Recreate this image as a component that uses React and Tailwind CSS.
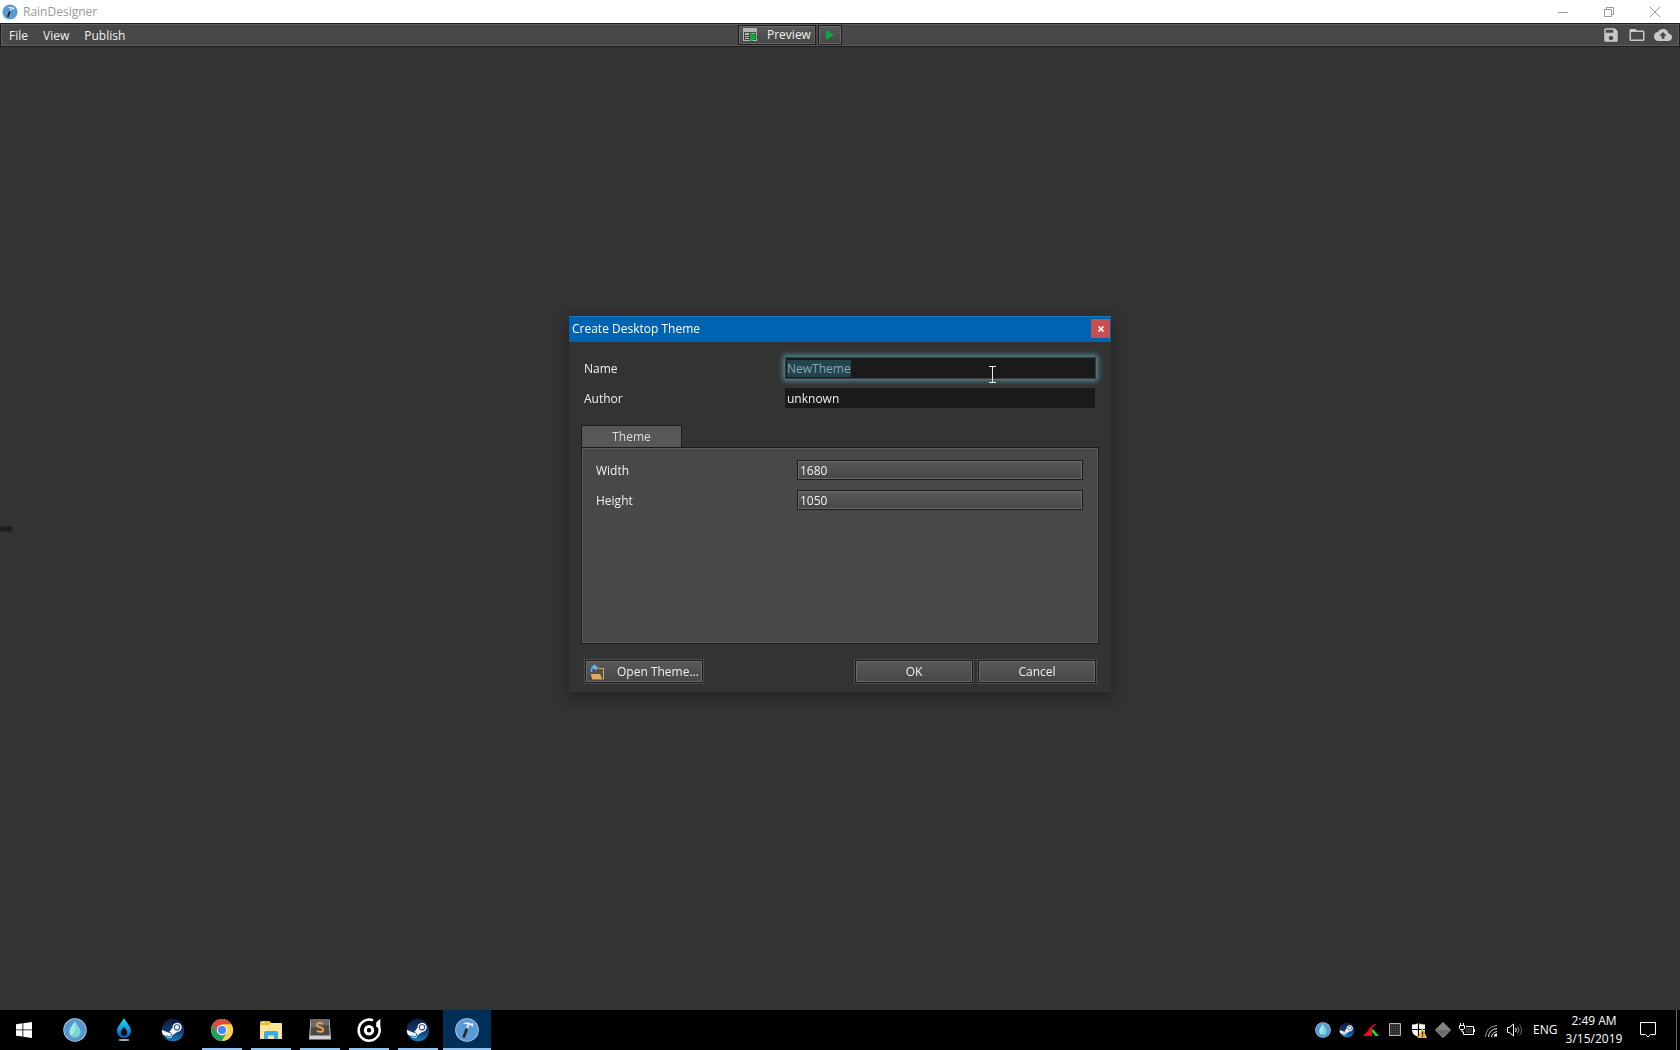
import { useEffect, useRef } from "react";
import { MdCloudUpload, MdFolderOpen, MdSave } from "react-icons/md";

const bevel = "border border-[#1c1c1c] inset-ring inset-ring-[#696969] bg-linear-to-b from-[#595959] to-[#474747]";

function HammerIcon({ className = "" }) {
  return (
    <svg viewBox="0 0 24 24" className={className} aria-hidden="true">
      <circle cx="12" cy="12" r="11.8" fill="#b9d5ee" />
      <circle cx="12" cy="12" r="11" fill="#5a9bd5" />
      <path d="M13.200 7l-1.700 5.500" stroke="#e8eef3" strokeWidth="1.800" />
      <path d="M11.600 11.500L9 18.500" stroke="#2b2b2b" strokeWidth="2.800" strokeLinecap="round" />
      <path d="M7.800 5.800c2-1.500 4-1.600 6-1l3.200 1 .5-.5 1 .4-.8 3-1-.3-.2-.8-4-1.200c-1.500-.5-3-.6-4.700-.6z" fill="#f6f8fa" />
    </svg>
  );
}

function DropIcon({ className = "" }) {
  return (
    <svg viewBox="0 0 24 24" className={className} aria-hidden="true">
      <circle cx="12" cy="12" r="11.700" fill="#c3d9ec" />
      <circle cx="12" cy="12" r="10.900" fill="#5598d3" />
      <path d="M12 3.500c3 4.500 5.500 7 5.500 10.500a5.500 5.500 0 0 1-11 0c0-3.500 2.500-6 5.500-10.500z" fill="#7fd6d0" />
      <path d="M12 3.500c-3 4.500-5.500 7-5.500 10.500 0 1.500.6 2.900 1.600 3.900 4-3 5-8 3.900-14.400z" fill="#a3e8e0" />
    </svg>
  );
}

function FlameIcon({ className = "" }) {
  return (
    <svg viewBox="0 0 24 24" className={className} aria-hidden="true">
      <defs>
        <linearGradient id="flame" x1="0" y1="0" x2="0" y2="1">
          <stop offset="0" stopColor="#1fe0f0" />
          <stop offset="0.5" stopColor="#0aa6e6" />
          <stop offset="1" stopColor="#0a56b4" />
        </linearGradient>
      </defs>
      <path d="M12 0c3 5.500 7 8.500 7 13a7 7 0 0 1-14 0c0-4.500 4-7.500 7-13z" fill="url(#flame)" />
      <path d="M12 8.500c1.600 2.400 3.200 4 3.200 6a3.200 3.200 0 0 1-6.400 0c0-2 1.600-3.600 3.200-6z" fill="#020b14" />
      <ellipse cx="12" cy="22" rx="5.500" ry="0.900" fill="#a9bcc8" />
    </svg>
  );
}

function SteamIcon({ className = "" }) {
  return (
    <svg viewBox="0 0 24 24" className={className} aria-hidden="true">
      <defs>
        <linearGradient id="steam" x1="0" y1="0" x2="0" y2="1">
          <stop offset="0" stopColor="#101a3c" />
          <stop offset="0.500" stopColor="#12356c" />
          <stop offset="1" stopColor="#1482bd" />
        </linearGradient>
        <clipPath id="steamClip">
          <circle cx="12" cy="12" r="11.200" />
        </clipPath>
      </defs>
      <circle cx="12" cy="12" r="11.200" fill="url(#steam)" />
      <g clipPath="url(#steamClip)">
        <path d="M0 11.500l6.500 2.800 1.800-.3 3.200-4.600a4.600 4.600 0 1 1 4.700 4.500l-4.700 3.300a3.300 3.300 0 0 1-6.300.9L0 16z" fill="#f4f6f8" />
        <circle cx="16" cy="9.300" r="3.100" fill="#14346a" />
        <circle cx="16" cy="9.300" r="2.200" fill="#f4f6f8" />
        <path d="M6 17.200a2.300 2.300 0 1 0 1.200-2.700" fill="none" stroke="#14508a" strokeWidth="0.900" />
      </g>
    </svg>
  );
}

function ChromeIcon({ className = "" }) {
  return (
    <svg viewBox="0 0 24 24" className={className} aria-hidden="true">
      <circle cx="12" cy="12" r="11" fill="#fbd04b" />
      <path d="M12 1a11 11 0 0 1 9.500 5.500H12L7.200 14.700 2.500 6.500A11 11 0 0 1 12 1z" fill="#de4c3f" />
      <path d="M2.500 6.500l4.700 8.300 9.600 0-4.800 8.200A11 11 0 0 1 2.500 6.500z" fill="#1ba160" />
      <path d="M21.500 6.500H12l4.800 8.300-4.800 8.200A11 11 0 0 0 21.500 6.500z" fill="#fbd04b" />
      <circle cx="12" cy="12" r="5.200" fill="#f4f6f8" />
      <circle cx="12" cy="12" r="4.100" fill="#4287f3" />
    </svg>
  );
}

function ExplorerIcon({ className = "" }) {
  return (
    <svg viewBox="0 0 24 24" className={className} aria-hidden="true">
      <path d="M1 4.500q0-1.500 1.500-1.500h8L12 5h9.500q1 0 1 1v15H1z" fill="#f0b92e" />
      <path d="M1 7h9l1.500-2H22q1 0 1 1v15H1z" fill="#fde69a" />
      <path d="M3 4.500h2" stroke="#fff4c4" />
      <path d="M5 21v-6q0-2 2-2h10q2 0 2 2v6h-4v-3.500H9V21z" fill="#37aee4" />
    </svg>
  );
}

function SublimeIcon({ className = "" }) {
  return (
    <svg viewBox="0 0 24 24" className={className} aria-hidden="true">
      <path d="M2.500 1h19L23 21.500H1z" fill="#d2d2d2" />
      <path d="M3.200 1h17.600l1 16.500H2.200z" fill="#4a4a4a" />
      <path d="M3.200 1h17.600l.4 6Q12 7 2.800 10z" fill="#6b6b6b" />
      <path d="M15 5.500q-6-1.600-6 1.500 0 1.800 3 2.200 3.200.500 3.200 2.500 0 3.200-6.400 1.400" fill="none" stroke="#f59a3c" strokeWidth="2" />
    </svg>
  );
}

function GrooveIcon({ className = "" }) {
  return (
    <svg viewBox="0 0 24 24" className={className} aria-hidden="true">
      <path d="M16 2.400A10.500 10.500 0 1 0 22 8.500" fill="none" stroke="#fff" strokeWidth="2.500" />
      <path d="M19.200 4.500L23.300.8V9.500q-2.500 1-4.100-1z" fill="#fff" />
      <circle cx="12" cy="12.200" r="3.700" fill="none" stroke="#fff" strokeWidth="3" />
    </svg>
  );
}

function WindowsIcon() {
  return (
    <svg viewBox="0 0 16 16" className="size-4" fill="#fff" aria-hidden="true">
      <path d="M0 2.200l6.500-.9v6.200H0zM7.300 1.200L16 0v7.500H7.300zM0 8.300h6.500v6.300L0 13.700zM7.300 8.300H16V16l-8.700-1.200z" />
    </svg>
  );
}

function PreviewIcon() {
  return (
    <svg viewBox="0 0 15 14" className="h-3.5 w-[15px]" aria-hidden="true">
      <path d="M0 0h14v13H0z" fill="#b4b4b4" />
      <path d="M1 4h12v8H1z" fill="#484848" />
      <path d="M2 5h4v2H2zM2 8h4v1H2zM2 10h4v1H2zM8 5h4v1H8z" fill="#b4b4b4" />
      <path d="M7 4l8 5-8 5z" fill="#0caa3c" />
    </svg>
  );
}

function OpenThemeIcon() {
  return (
    <svg viewBox="0 0 15 16" className="h-4 w-[15px]" aria-hidden="true">
      <path d="M8 4.500h5.500v11" fill="none" stroke="#d9a862" />
      <path d="M.5 10h9.500l2.500 5.500H2.500z" fill="#dcaa64" />
      <path d="M1.500 8V5.300q0-2 2-2H5" fill="none" stroke="#58a8ea" strokeWidth="1.800" />
      <path d="M2.500 1.800L4.500.8 8 3.500 5 7.200V4.800H3z" fill="#6bb8f4" />
    </svg>
  );
}

function TrayTriangles() {
  return (
    <svg viewBox="0 0 16 16" className="size-4" aria-hidden="true">
      <path d="M0 14L9 4.500V14z" fill="#f00d12" />
      <path d="M9 7.500h1.500L16 14h-3.500L9 10z" fill="#12e41c" />
      <path d="M6 7.500L12.500 2" stroke="#f00d12" strokeWidth="1.500" />
    </svg>
  );
}

function TrayGrid() {
  return (
    <svg viewBox="0 0 16 16" className="size-4" aria-hidden="true">
      <defs>
        <pattern id="dots" width="2" height="2" patternUnits="userSpaceOnUse">
          <path d="M0 0h2v2H0z" fill="#2a2a2a" />
          <path d="M0 0h1v1H0z" fill="#4d4d4d" />
        </pattern>
      </defs>
      <path d="M2.500 1.500h11v12h-11z" fill="url(#dots)" stroke="#b4b4b4" />
    </svg>
  );
}

function TrayShield() {
  return (
    <svg viewBox="0 0 16 16" className="size-4" aria-hidden="true">
      <path d="M1 2.500Q5 2.500 7.500 1 10 2.500 14 2.500V8q0 5-6.500 7Q1 13 1 8z" fill="#fff" />
      <path d="M7.500 1v14M1 7.500h13" stroke="#000" strokeWidth="1.200" />
      <path d="M11.500 6L16 16H6.500z" fill="#f9b91e" />
      <path d="M11.500 9.500v3.200M11.500 13.500v1.300" stroke="#222" strokeWidth="1.300" />
    </svg>
  );
}

function TrayDiamond() {
  return (
    <svg viewBox="0 0 16 16" className="size-4" aria-hidden="true">
      <path d="M8 .5L15.500 8 8 15.500.5 8z" fill="#6a6a6a" stroke="#a5a5a5" />
      <path d="M8 1.500L14.500 8 1.500 8z" fill="#848484" />
    </svg>
  );
}

function TrayBattery() {
  return (
    <svg viewBox="0 0 16 16" className="size-4" fill="none" stroke="#fff" aria-hidden="true">
      <path d="M7 4.500h7.500v8h-10V10M15.500 7v3" />
      <path d="M6.500 6h6.500v5h-6.500z" fill="#333" stroke="none" />
      <path d="M1.500 1v2.500M4.500 1v2.500M.5 3.500h5v3l-1 1h-3l-1-1zM3 7.500V10h2" />
    </svg>
  );
}

function TrayWifi() {
  return (
    <svg viewBox="0 0 16 16" className="size-4" fill="none" stroke="#e8e8e8" aria-hidden="true">
      <path d="M2.500 15Q3 4.500 14 3.500" stroke="#999" />
      <path d="M5.500 15Q6 7.500 14 6.500M8.500 15Q9 10.500 14 9.500" />
      <path d="M11 14.500a3 3 0 0 1 3-3v3z" fill="#fff" stroke="none" />
    </svg>
  );
}

function TrayVolume() {
  return (
    <svg viewBox="0 0 16 16" className="size-4" fill="none" stroke="#fff" aria-hidden="true">
      <path d="M.5 5.500h2L6.500 2v12l-4-3.500h-2z" />
      <path d="M8.500 6q1.500 2 0 4" />
      <path d="M10.500 4.500q3 3.500 0 7" stroke="#999" />
      <path d="M12.500 2.500q4 5.500 0 11" stroke="#666" />
    </svg>
  );
}

const taskbarItems = [
  { name: "Rain", Icon: DropIcon },
  { name: "Rainmeter", Icon: FlameIcon },
  { name: "Steam", Icon: SteamIcon },
  { name: "Chrome", Icon: ChromeIcon, open: true },
  { name: "File Explorer", Icon: ExplorerIcon, open: true },
  { name: "Sublime Text", Icon: SublimeIcon, open: true },
  { name: "Groove Music", Icon: GrooveIcon, open: true },
  { name: "Steam window", Icon: SteamIcon, open: true },
  { name: "RainDesigner", Icon: HammerIcon, open: true, active: true },
];

const trayItems = [
  { name: "Rain", Icon: DropIcon },
  { name: "Steam", Icon: SteamIcon },
  { name: "Monitor", Icon: TrayTriangles },
  { name: "Grid", Icon: TrayGrid },
  { name: "Security", Icon: TrayShield },
  { name: "Diamond", Icon: TrayDiamond },
  { name: "Power", Icon: TrayBattery },
  { name: "Network", Icon: TrayWifi },
  { name: "Volume", Icon: TrayVolume },
];

function TitleBar() {
  return (
    <header className="flex h-[23px] items-center bg-white pr-0.5 text-[#999]">
      <HammerIcon className="ml-0.5 size-4" />
      <h1 className="ml-[5px] flex-1">RainDesigner</h1>
      <button aria-label="Minimize" className="flex h-full w-[46px] items-center justify-center">
        <svg viewBox="0 0 10 10" className="size-2.5" stroke="currentColor"><path d="M0 5.500h10" /></svg>
      </button>
      <button aria-label="Restore" className="flex h-full w-[46px] items-center justify-center">
        <svg viewBox="0 0 10 10" className="size-2.5" fill="none" stroke="currentColor"><path d="M.5 2.500h7v7h-7zM2.500 2V.5h7v7H8" /></svg>
      </button>
      <button aria-label="Close" className="flex h-full w-[46px] items-center justify-center">
        <svg viewBox="0 0 10 10" className="size-2.5" stroke="currentColor"><path d="M0 0l10 10M10 0L0 10" /></svg>
      </button>
    </header>
  );
}

function MenuBar() {
  return (
    <div className="grid h-6 grid-cols-[1fr_auto_1fr] items-center border border-[#1c1c1c] bg-[#484848] text-[#f0f0f0] inset-ring inset-ring-[#5c5c5c]">
      <nav className="flex gap-[15px] pt-0.5 pl-2">
        <button>File</button>
        <button>View</button>
        <button>Publish</button>
      </nav>
      <div className="flex gap-0.5 pr-[100px]">
        <button className={`flex h-5 w-[78px] items-center gap-[9px] pl-1 ${bevel}`}>
          <PreviewIcon />
          Preview
        </button>
        <button aria-label="Run" className={`flex h-5 w-6 items-center justify-center ${bevel}`}>
          <svg viewBox="0 0 8 10" className="h-2.5 w-2" fill="#0caa3c"><path d="M0 0l8 5-8 5z" /></svg>
        </button>
      </div>
      <div className="flex justify-end gap-2 pr-[7px] text-[#c8c8c8]">
        <button aria-label="Save"><MdSave size={18} /></button>
        <button aria-label="Open"><MdFolderOpen size={18} /></button>
        <button aria-label="Upload"><MdCloudUpload size={18} /></button>
      </div>
    </div>
  );
}

function Dialog() {
  const nameRef = useRef(null);

  useEffect(() => {
    nameRef.current.focus();
    nameRef.current.select();
  }, []);

  return (
    <section role="dialog" aria-labelledby="dialog-title" className="w-[542px] bg-[#333] text-[#f0f0f0] shadow-[0_4px_16px_rgba(0,0,0,0.4)]">
      <div className="flex h-[26px] items-center justify-between border-t border-[#1a78c2] bg-[#0063b1] pr-px pb-0.5 pl-[3px]">
        <h2 id="dialog-title" className="text-white">Create Desktop Theme</h2>
        <button aria-label="Close dialog" className="flex size-[19px] items-center justify-center bg-[#c75050]">
          <svg viewBox="0 0 6 6" className="size-1.5" stroke="#fff" strokeWidth="1.500"><path d="M.5.5l5 5M5.500.5l-5 5" /></svg>
        </button>
      </div>

      <form className="px-3 pt-[15px] pb-2" onSubmit={(e) => e.preventDefault()}>
        <div className="flex h-[22px] items-center px-[3px]">
          <label htmlFor="name" className="flex-1 pt-0.5">Name</label>
          <div className="relative w-[311px]">
            <input
              id="name"
              ref={nameRef}
              defaultValue="NewTheme"
              className="block h-[22px] w-full border border-[#3c3c3c] bg-[#1a1a1a] px-px shadow-[0_0_5px_2px_#4f8a99] outline-none selection:bg-[#23444f] selection:text-[#84a6ae]"
            />
            <svg viewBox="0 0 7 17" className="absolute top-[9px] left-[204px] h-[17px] w-[7px]" fill="none" stroke="#e8e8e8" aria-hidden="true">
              <path d="M0 .5h7M3.500 1v15M0 16.500h7" />
            </svg>
          </div>
        </div>
        <div className="mt-2 flex h-[22px] items-center pr-1 pl-[3px]">
          <label htmlFor="author" className="flex-1 pt-0.5">Author</label>
          <input id="author" defaultValue="unknown" className="h-5 w-[310px] bg-[#1a1a1a] px-0.5 outline-none" />
        </div>

        <div role="tablist" className="mt-4 flex">
          <button type="button" role="tab" aria-selected="true" className="h-[22px] w-[101px] border border-b-0 border-[#1c1c1c] bg-[#575757] text-[#dcdcdc]">
            Theme
          </button>
        </div>
        <div role="tabpanel" className="h-[197px] space-y-2.5 border border-[#1c1c1c] bg-[#484848] pt-3 pr-[15px] pl-3.5 inset-ring inset-ring-[#5c5c5c]">
          <div className="flex items-center">
            <label htmlFor="width" className="flex-1 pt-0.5">Width</label>
            <input id="width" defaultValue="1680" className={`h-5 w-[286px] px-0.5 outline-none ${bevel}`} />
          </div>
          <div className="flex items-center">
            <label htmlFor="height" className="flex-1 pt-0.5">Height</label>
            <input id="height" defaultValue="1050" className={`h-5 w-[286px] px-0.5 outline-none ${bevel}`} />
          </div>
        </div>

        <div className="mt-4 mb-px flex gap-[5px] pr-[3px] pl-1">
          <button type="button" className={`mr-auto flex h-[23px] w-[118px] items-center gap-3 pl-1 ring ring-[#4c4c4c] ${bevel}`}>
            <OpenThemeIcon />
            Open Theme...
          </button>
          <button className={`h-[23px] w-[118px] ring ring-[#4c4c4c] ${bevel}`}>OK</button>
          <button type="button" className={`h-[23px] w-[118px] ring ring-[#4c4c4c] ${bevel}`}>Cancel</button>
        </div>
      </form>
    </section>
  );
}

function Taskbar() {
  return (
    <footer className="flex h-10 items-stretch bg-black text-white">
      <button aria-label="Start" className="mr-[3px] flex w-12 items-center justify-center">
        <WindowsIcon />
      </button>
      <div className="flex flex-1 gap-px">
        {taskbarItems.map(({ name, Icon, open, active }) => (
          <button key={name} aria-label={name} className={`flex w-12 flex-col items-center ${active ? "bg-[#003058]" : ""}`}>
            <Icon className="mt-2 size-6" />
            {open && <span className={`mt-auto h-0.5 bg-[#91c4f2] ${active ? "w-full" : "w-10"}`} />}
          </button>
        ))}
      </div>
      <div className="flex items-center gap-2">
        {trayItems.map(({ name, Icon }) => (
          <button key={name} aria-label={name}>
            <Icon className="size-4" />
          </button>
        ))}
      </div>
      <button className="ml-2.5 w-6">ENG</button>
      <div className="ml-1.5 flex w-[62px] flex-col justify-center text-center leading-[18px]">
        <time>2:49 AM</time>
        <time>3/15/2019</time>
      </div>
      <button aria-label="Notifications" className="ml-1.5 flex w-[45px] items-center justify-center pr-3">
        <svg viewBox="0 0 16 16" className="size-4" fill="none" stroke="#fff"><path d="M.5.500h15v12h-5L8 15l-2.500-2.500h-5z" /></svg>
      </button>
      <div className="mr-[3px] border-l border-[#666]" />
    </footer>
  );
}

export default function App() {
  return (
    <div className="flex h-screen flex-col bg-[#333] font-['Open_Sans',sans-serif] text-[12px] leading-4">
      <TitleBar />
      <MenuBar />
      <main className="flex flex-1 items-center">
        <div className="flex">
          <span className="size-1.5 rounded-full bg-[#1e1e1e]" />
          <span className="size-1.5 rounded-full bg-[#1e1e1e]" />
        </div>
      </main>
      <Taskbar />
      <div className="fixed inset-x-0 top-0 bottom-[42px] flex items-center justify-center">
        <Dialog />
      </div>
    </div>
  );
}
